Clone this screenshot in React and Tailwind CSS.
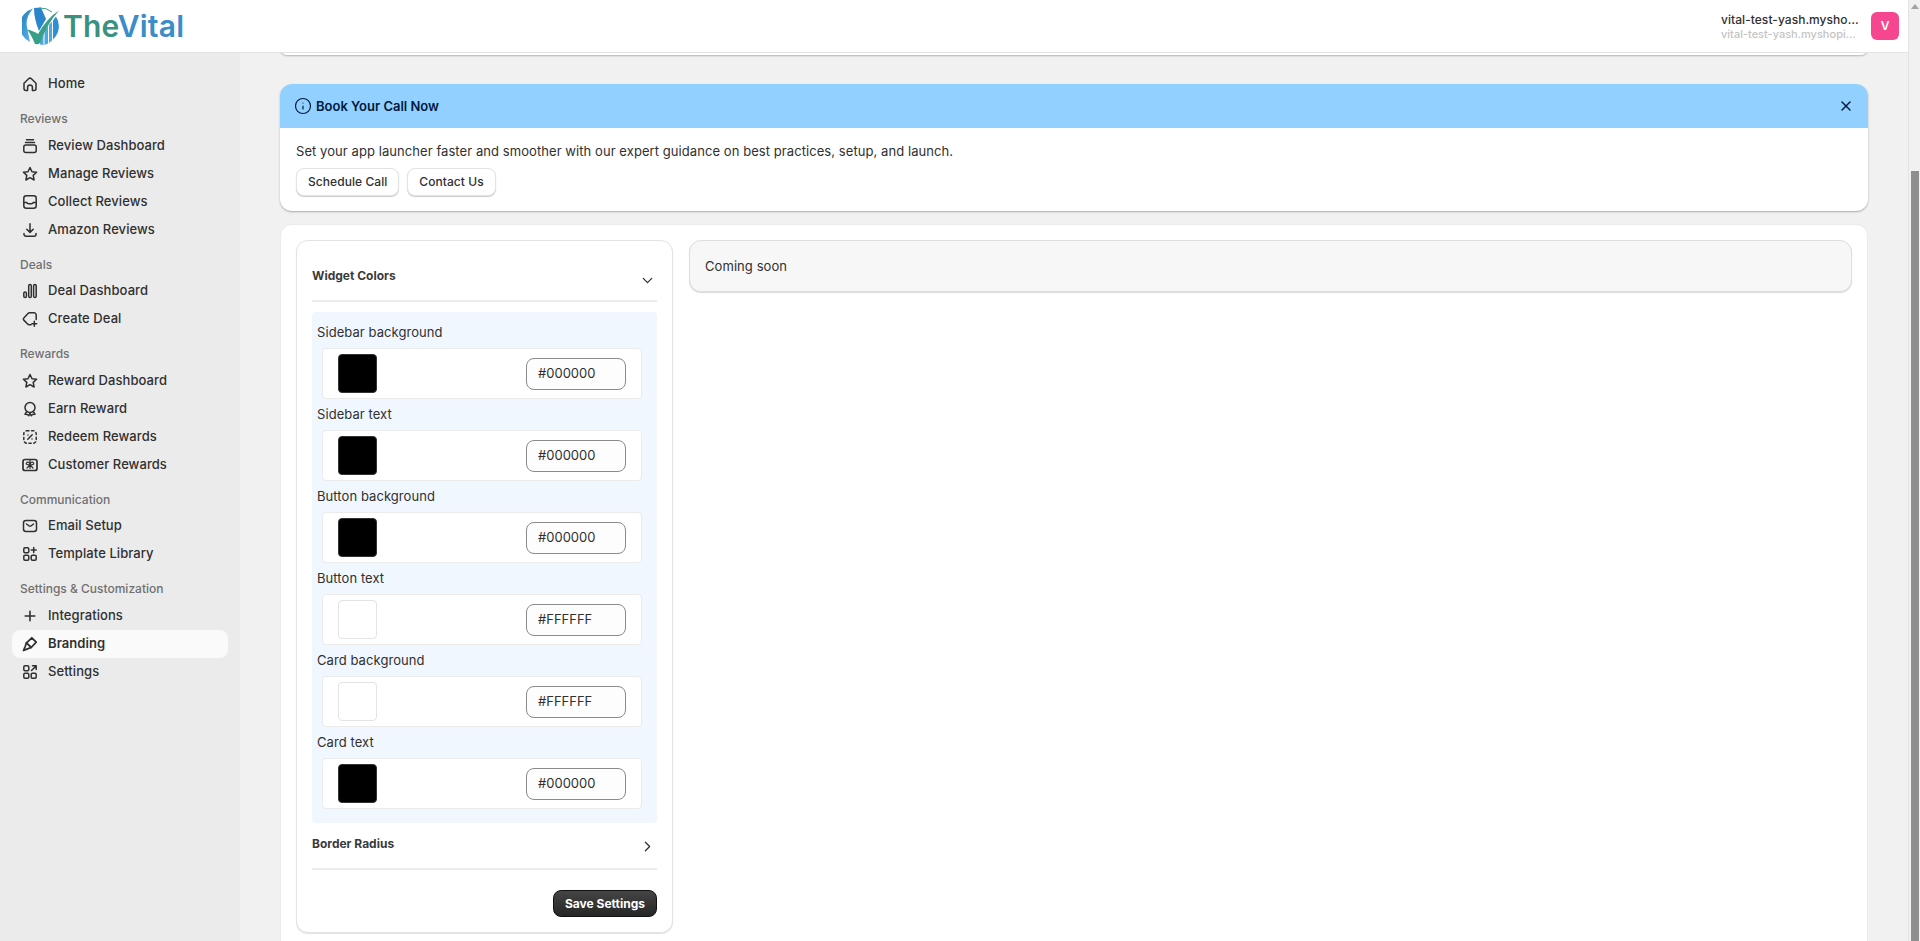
import { ChevronDown, ChevronRight, Info, X } from 'lucide-react';

const Ico = ({ children }) => (
    <svg viewBox="0 0 20 20" className="w-5 h-5 shrink-0 text-[#303030]" fill="none" stroke="currentColor" strokeWidth="1.5" strokeLinecap="round" strokeLinejoin="round">
        {children}
    </svg>
);

const icons = {
    home: <path d="M4 9.2 8.6 4.8a2 2 0 0 1 2.800 0L16 9.200v5.300a2 2 0 0 1-2 2h-1.600v-3.200a2.400 2.400 0 0 0-4.800 0v3.200H6a2 2 0 0 1-2-2z" />,
    stack: <><path d="M6.500 3.800h7M5.500 6.500h9" /><rect x="3.800" y="9" width="12.400" height="7.500" rx="2" /></>,
    star: <path d="m10 3.500 2 4.200 4.600.6-3.400 3.100.9 4.600-4.100-2.300L5.900 16l.9-4.600-3.400-3.100 4.600-.6z" />,
    inbox: <><rect x="3.800" y="3.800" width="12.400" height="12.400" rx="2.500" /><path d="M4 10.500h2.800a1.800 1.800 0 0 0 1.700 1.300h3a1.800 1.800 0 0 0 1.700-1.300H16" /></>,
    download: <path d="M10 3.800v8.400M6.800 9.200l3.200 3.200 3.200-3.200M4 13.500v.7a2 2 0 0 0 2 2h8a2 2 0 0 0 2-2v-.7" />,
    bars: <><rect x="3.800" y="11" width="2.600" height="5.500" rx="1.300" /><rect x="8.700" y="3.500" width="2.600" height="13" rx="1.300" /><rect x="13.600" y="3.500" width="2.600" height="13" rx="1.300" /></>,
    tag: <path d="M16.200 10.500V6a2.200 2.200 0 0 0-2.200-2.200H9.500a2 2 0 0 0-1.500.6L3.800 9a1.500 1.500 0 0 0 0 2.100l3.800 4a2 2 0 0 0 1.500.7h1.900M14.300 12.300v4.900M11.900 14.800h4.800" />,
    award: <><circle cx="10" cy="8.500" r="5" /><path d="m6.800 12.500-1.800 2.700 2.500.3 1.300 1.300 1.200-2.600 1.200 2.600 1.300-1.300 2.500-.3-1.800-2.700" /></>,
    percent: <><rect x="3.800" y="3.800" width="12.400" height="12.400" rx="3" strokeDasharray="2.200 2.600" /><path d="m12.200 7.800-4.400 4.400" /><path d="M8 8h.01M12 12h.01" /></>,
    gift: <><rect x="3" y="4.500" width="14" height="11" rx="2" strokeWidth="1.700" /><path d="M6.500 8c1-1.500 3-1 3.500 1.800-2.500.5-4.500-.6-3.500-1.800zM13.500 8c-1-1.500-3-1-3.500 1.800 2.500.5 4.500-.6 3.500-1.800zM7 13l3-3.200 3 3.200M10 5v8.500" strokeWidth="1.200" /></>,
    mail: <><rect x="3.500" y="4.500" width="13" height="11" rx="2.500" /><path d="m6.500 8 2.700 2a1.500 1.500 0 0 0 1.700 0L13.500 8" /></>,
    template: <><rect x="3.800" y="3.800" width="5" height="5" rx="1.200" /><rect x="3.800" y="11.200" width="5" height="5" rx="1.200" /><rect x="11.200" y="11.200" width="5" height="5" rx="1.200" /><path d="M13.700 3.600v5M11.200 6.100h5" /></>,
    plus: <path d="M10 5.200v9.600M5.200 10h9.600" strokeWidth="1.600" />,
    brush: <><path d="m11.800 3.800 4.400 4.400-5 5.300-4.700-4.700z" strokeWidth="1.800" /><path d="m6.500 8.800-1.300 3.700-1.700 4 4-1.700 3.700-1.300" strokeWidth="1.800" /></>,
    apps: <><rect x="3.800" y="3.800" width="5" height="5" rx="1.200" /><rect x="3.800" y="11.200" width="5" height="5" rx="1.200" /><rect x="11.200" y="11.200" width="5" height="5" rx="1.200" /><path d="m11.500 8.500 4.500-4.500M12.500 3.800h3.700v3.700" /></>,
};

const nav = [
    { items: [['home', 'Home']] },
    { title: 'Reviews', items: [['stack', 'Review Dashboard'], ['star', 'Manage Reviews'], ['inbox', 'Collect Reviews'], ['download', 'Amazon Reviews']] },
    { title: 'Deals', items: [['bars', 'Deal Dashboard'], ['tag', 'Create Deal']] },
    { title: 'Rewards', items: [['star', 'Reward Dashboard'], ['award', 'Earn Reward'], ['percent', 'Redeem Rewards'], ['gift', 'Customer Rewards']] },
    { title: 'Communication', items: [['mail', 'Email Setup'], ['template', 'Template Library']] },
    { title: 'Settings & Customization', items: [['plus', 'Integrations'], ['brush', 'Branding'], ['apps', 'Settings']] },
];

const colors = [
    ['Sidebar background', '#000000'],
    ['Sidebar text', '#000000'],
    ['Button background', '#000000'],
    ['Button text', '#FFFFFF'],
    ['Card background', '#FFFFFF'],
    ['Card text', '#000000'],
];

function Logo() {
    return (
        <div className="flex items-center pl-[22px]">
            <svg viewBox="0 0 38 38" className="w-[38px] h-[38px]">
                <defs>
                    <linearGradient id="lg" x1="0" y1="0" x2="1" y2="1">
                        <stop offset="0" stopColor="#1c78bd" />
                        <stop offset="1" stopColor="#63bbec" />
                    </linearGradient>
                </defs>
                {/* left crescent */}
                <path d="M11 1.500A18 18 0 0 0 8 35L5 20Q3 11 11 1.500z" fill="url(#lg)" />
                {/* centre wedge */}
                <path d="M12 1 19 .5 24 12 17 24Q12 12 12 1z" fill="#2a86cc" />
                {/* lower right bars */}
                <path d="M18 37.500V29l3.500-4v13zM22.500 38V24l3.500-5v17.500zM27 36V18l3-3.500v19z" fill="#4fa8e0" />
                <path d="M31 32.500V13.500l3-4a18 18 0 0 1-3 23z" fill="#2f8fd4" />
                {/* green swoosh */}
                <path d="M5 22.500Q9 27 13 37q3 .7 5-1Q25 17 37 3.500 25 11 16 27 12 24 5 22.500z" fill="#38a086" />
                <path d="M17 1A18 18 0 0 1 30 5" fill="none" stroke="#38a086" strokeWidth="1" />
            </svg>
            <span className="ml-[3px] text-[30px] leading-none font-semibold font-['Inter',sans-serif] tracking-[0.2px]">
                <span className="text-[#3b9180]">The</span>
                <span className="text-[#3b8dc8]">Vital</span>
            </span>
        </div>
    );
}

function Sidebar() {
    return (
        <aside className="w-60 shrink-0 bg-[#ebebeb] px-3 pt-[17px]">
            {nav.map((group, i) => (
                <div key={i} className={i === 0 ? '' : 'mt-[11px]'}>
                    {group.title && (
                        <div className="h-[22.500px] px-2 text-xs leading-5 font-medium text-[#707070]">{group.title}</div>
                    )}
                    {group.items.map(([icon, label]) => (
                        <div
                            key={label}
                            className={`flex items-center gap-2 h-7 px-2 rounded-lg text-[13px] tracking-[0.07px] font-medium text-[#303030] ${label === 'Branding' ? 'bg-[#fafafa] font-semibold' : ''}`}
                        >
                            <Ico>{icons[icon]}</Ico>
                            <span>{label}</span>
                        </div>
                    ))}
                </div>
            ))}
        </aside>
    );
}

function Banner() {
    return (
        <div className="rounded-xl overflow-hidden bg-white shadow-[0_1px_2px_rgba(0,0,0,0.3)]">
            <div className="flex items-center justify-between h-11 pl-[14px] pr-[14px] bg-[#91d0ff] text-[#00193d]">
                <div className="flex items-center gap-1">
                    <Info size={18} strokeWidth={1.600} />
                    <span className="pt-[1px] text-[13px] font-semibold">Book Your Call Now</span>
                </div>
                <X size={16} strokeWidth={2.200} />
            </div>
            <div className="px-4 pt-[13px] h-[83px]">
                <p className="text-[13px] leading-5 tracking-[0.07px] text-[#303030]">Set your app launcher faster and smoother with our expert guidance on best practices, setup, and launch.</p>
                <div className="flex gap-2 mt-[7px]">
                    <button className="h-7 px-[11px] rounded-lg bg-white border border-[#e3e3e3] shadow-[0_1px_1px_rgba(0,0,0,0.2)] text-xs tracking-[0.06px] font-medium text-[#303030]">Schedule Call</button>
                    <button className="h-7 px-[11px] rounded-lg bg-white border border-[#e3e3e3] shadow-[0_1px_1px_rgba(0,0,0,0.2)] text-xs tracking-[0.06px] font-medium text-[#303030]">Contact Us</button>
                </div>
            </div>
        </div>
    );
}

function ColorRow({ label, value }) {
    return (
        <div>
            <div className="h-[31px] pt-[5px] text-[13px] leading-5 tracking-[0.07px] text-[#303030]">{label}</div>
            <div className="flex items-center justify-between h-[51px] ml-[5px] mr-[10px] pl-[15px] pr-[15px] bg-white border border-[#ebebeb] rounded-[4px]">
                <div
                    className={`w-[39px] h-[39px] rounded-[4px] border ${value === '#000000' ? 'bg-black border-[#333]' : 'bg-white border-[#e3e3e3]'}`}
                />
                <div className="flex items-center w-[100px] h-8 pl-[11px] bg-[#fdfdfd] border border-[#8a8a8a] rounded-lg text-[13px] text-[#303030]">{value}</div>
            </div>
        </div>
    );
}

function SettingsPanel() {
    return (
        <div className="w-[377px] h-[693px] shrink-0 bg-white border border-[#e3e3e3] rounded-xl px-[15px] pt-4 shadow-[0_1px_1px_rgba(0,0,0,0.12)]">
            <div className="flex justify-between h-[45px] border-b-2 border-[#ebebeb]">
                <span className="pt-[9px] text-xs leading-5 font-bold text-[#3a3a3a]">Widget Colors</span>
                <ChevronDown size={17} strokeWidth={1.800} className="mt-[15px] mr-[1px] text-[#303030]" />
            </div>
            <div className="mt-[10px] h-[511px] bg-[#f0f7fe] rounded-[4px] px-[5px] pt-[5px]">
                {colors.map(([label, value]) => <ColorRow key={label} label={label} value={value} />)}
            </div>
            <div className="flex justify-between h-[47px] border-b-2 border-[#ebebeb]">
                <span className="pt-[11px] text-xs leading-5 font-bold text-[#3a3a3a]">Border Radius</span>
                <ChevronRight size={17} strokeWidth={1.800} className="mt-[15px] mr-[1px] text-[#303030]" />
            </div>
            <div className="flex justify-end mt-[20px]">
                <button className="w-[104px] h-[27px] rounded-lg bg-gradient-to-b from-[#454545] to-[#262626] border border-[#111] text-xs font-bold text-white">Save Settings</button>
            </div>
        </div>
    );
}

export default function App() {
    return (
        <div className="flex h-screen overflow-hidden bg-[#f1f1f1] font-['Inter',sans-serif]">
            <div className="flex flex-col flex-1 min-w-0">
                <header className="flex items-center justify-between h-[53px] shrink-0 bg-white border-b border-[#e3e3e3] z-10">
                    <Logo />
                    <div className="flex items-center gap-3 pr-[9px]">
                        <div className="w-[138px]">
                            <div className="truncate pt-[1px] text-xs leading-[15px] font-medium tracking-[0.05px] text-[#303030]">vital-test-yash.myshopify.com</div>
                            <div className="truncate text-[11px] leading-[14px] font-medium text-[#c4c4c4]">vital-test-yash.myshopify.com</div>
                        </div>
                        <div className="flex items-center justify-center w-7 h-7 rounded-md bg-[#f5468f] text-xs font-semibold text-white">V</div>
                    </div>
                </header>
                <div className="flex flex-1 min-h-0">
                    <Sidebar />
                    <main className="flex-1 min-w-0 px-10 overflow-hidden">
                        <div className="h-[14px] -mt-[12px] bg-white rounded-xl shadow-[0_1px_2px_rgba(0,0,0,0.25)]" />
                        <div className="mt-[29px]"><Banner /></div>
                        <div className="mt-[13px] bg-white rounded-t-xl border border-[#ebebeb] p-[15px] h-[800px] flex gap-4">
                            <SettingsPanel />
                            <div className="flex-1 h-[52px] flex items-center px-[15px] pt-[1px] bg-[#f7f7f7] border border-[#dedede] rounded-xl shadow-[0_1px_1px_rgba(0,0,0,0.15)] text-[13px] tracking-[0.07px] text-[#303030]">Coming soon</div>
                        </div>
                    </main>
                </div>
            </div>
            <div className="w-3 shrink-0 bg-[#f1f1f1] border-l border-[#e3e3e3] flex flex-col items-center">
                <div className="mt-[4px] w-0 h-0 border-x-[4px] border-x-transparent border-b-[5px] border-b-[#a3a3a3]" />
                <div className="mt-[162px] w-2 flex-1 bg-[#8f8f8f]" />
            </div>
        </div>
    );
}
